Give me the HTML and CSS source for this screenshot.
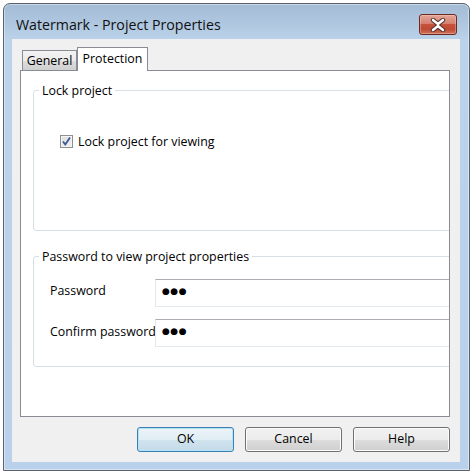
FILE: index.html
```html
<!DOCTYPE html>
<html>
<head>
<meta charset="utf-8">
<link rel="stylesheet" href="styles.css">
</head>
<body>
<div class="window">
  <div class="titlebar">
    <div class="title">Watermark - Project Properties</div>
    <div class="close">
      <svg width="20" height="14" viewBox="0 0 20 14">
        <path d="M5 2 L10 6 L15 2 M5 12 L10 8 L15 12" fill="none" stroke="#4a2a2a" stroke-width="4.4" stroke-linecap="round" stroke-linejoin="round"/>
        <path d="M5 2 L10 6 L15 2 M5 12 L10 8 L15 12" fill="none" stroke="#ffffff" stroke-width="2.6" stroke-linecap="round" stroke-linejoin="round"/>
      </svg>
    </div>
  </div>
  <div class="client">
    <div class="tabs">
      <div class="tab">General</div>
      <div class="tab active">Protection</div>
    </div>
    <div class="panel">
      <div class="group group-lock">
        <div class="legend">Lock project</div>
        <div class="check-row">
          <span class="checkbox">
            <svg width="11" height="11" viewBox="0 0 11 11"><path d="M2 5.5 L4.3 8.5 L9 1.5" fill="none" stroke="#3d5894" stroke-width="1.8"/></svg>
          </span>
          <span>Lock project for viewing</span>
        </div>
      </div>
      <div class="group group-pass">
        <div class="legend">Password to view project properties</div>
        <div class="field-row">
          <div class="label">Password</div>
          <div class="input">●●●</div>
        </div>
        <div class="field-row second">
          <div class="label">Confirm password</div>
          <div class="input">●●●</div>
        </div>
      </div>
    </div>
    <div class="buttons">
      <div class="btn default">OK</div>
      <div class="btn">Cancel</div>
      <div class="btn">Help</div>
    </div>
  </div>
</div>
</body>
</html>
```

FILE: styles.css
```css
* { box-sizing: border-box; }
html, body { margin: 0; padding: 0; }
body {
  background: #ffffff;
  width: 471px;
  height: 473px;
  overflow: hidden;
  font-family: "Open Sans", "Noto Sans", sans-serif;
  font-size: 12.4px;
  color: #000;
}
.window {
  margin: 3px 0 0 3px;
  width: 467px;
  height: 468px;
  border: 1px solid #5a636d;
  border-radius: 7px 7px 0 0;
  background: linear-gradient(to bottom, #a3bbd5 0px, #b0c8e0 22px, #bad2ea 36px, #b9d1ea 100%);
  box-shadow: inset 0 0 0 1px rgba(255,255,255,0.4);
  display: flex;
  flex-direction: column;
  padding: 0 9px 8px 8px;
}
.titlebar {
  height: 35px;
  display: flex;
  align-items: flex-start;
  padding-left: 4px;
}
.title {
  font-size: 14.2px;
  line-height: 20px;
  margin-top: 11px;
  color: #101010;
}
.close {
  margin-left: auto;
  margin-right: 3px;
  margin-top: 10px;
  width: 38px;
  height: 21px;
  border: 1px solid #6b2a22;
  border-radius: 3px;
  background: linear-gradient(to bottom, #e3a699 0%, #d5806f 45%, #c5523c 50%, #bf4a33 75%, #d0735d 100%);
  box-shadow: inset 0 0 0 1px rgba(255,220,210,0.35);
  display: flex;
  align-items: center;
  justify-content: center;
}
.client {
  flex: 1;
  background: #f0f0f0;
  padding: 8px 10px 0 8px;
  display: flex;
  flex-direction: column;
}
.tabs {
  height: 23px;
  display: flex;
  align-items: flex-end;
  padding-left: 2px;
}
.tab {
  width: 55px;
  height: 20px;
  border: 1px solid #898c95;
  border-bottom: none;
  background: linear-gradient(to bottom, #f3f3f3 0%, #ebebeb 50%, #dddddd 51%, #cfcfcf 100%);
  text-align: center;
  line-height: 20px;
}
.tab.active {
  width: 71px;
  height: 24px;
  margin-bottom: -1px;
  background: #ffffff;
  position: relative;
  z-index: 1;
  line-height: 22px;
}
.panel {
  height: 347px;
  border: 1px solid #898c95;
  background: #ffffff;
  overflow: hidden;
  padding: 19px 0 0 12px;
}
.group {
  width: 480px;
  border: 1px solid #d5dfe5;
  border-radius: 3px;
}
.group-lock { height: 141px; }
.group-pass { height: 111px; margin-top: 25px; }
.legend {
  width: fit-content;
  margin: -8px 0 0 5px;
  padding: 0 3px;
  background: #ffffff;
  line-height: 15px;
}
.check-row {
  margin-top: 36px;
  padding-left: 26px;
  display: flex;
  align-items: center;
  height: 15px;
  gap: 5px;
}
.checkbox {
  width: 13px;
  height: 13px;
  border: 1px solid #8e8f8f;
  background: linear-gradient(135deg, #dcdcdc 0%, #f4f4f4 100%);
  box-shadow: inset 0 0 0 1px #f4f4f4;
  display: flex;
  align-items: center;
  justify-content: center;
}
.field-row {
  display: flex;
  align-items: flex-start;
  margin-top: 15px;
  padding-left: 16px;
}
.field-row.second { margin-top: 12px; }
.label {
  width: 105px;
  flex-shrink: 0;
  white-space: nowrap;
  line-height: 16px;
  margin-top: 4px;
}
.field-row.second .label { margin-top: 5px; }
.input {
  flex: 1;
  height: 28px;
  border: 1px solid #e3e9ef;
  border-top-color: #abadb3;
  padding: 0 0 0 6px;
  font-family: "DejaVu Sans", sans-serif;
  font-size: 9px;
  letter-spacing: 0.5px;
  line-height: 22px;
}
.buttons {
  display: flex;
  justify-content: flex-end;
  gap: 11px;
  margin-top: 10px;
}
.btn {
  width: 97px;
  height: 25px;
  border: 1px solid #707070;
  border-radius: 3px;
  background: linear-gradient(to bottom, #f2f2f2 0%, #ebebeb 50%, #dddddd 51%, #cfcfcf 100%);
  box-shadow: inset 0 0 0 1px #fcfcfc;
  text-align: center;
  line-height: 22px;
}
.btn.default {
  border-color: #3c7fb1;
  background: linear-gradient(to bottom, #eaf3f8 0%, #e2eef5 50%, #d0e3ee 51%, #c4dbe8 100%);
  box-shadow: inset 0 0 0 1px #b3e3f8;
}
```
